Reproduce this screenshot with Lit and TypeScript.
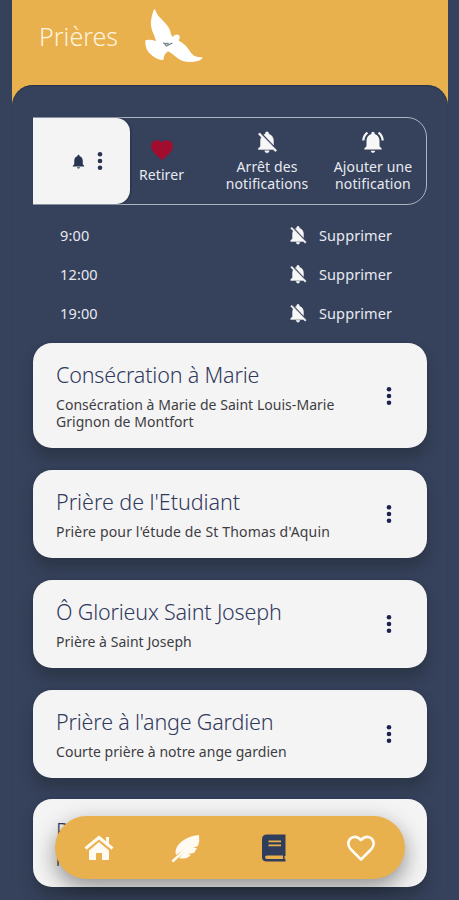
import { LitElement, html, css, svg } from "lit";
import { customElement, property } from "lit/decorators.js";

const P = {
  heart: "M12 21.35l-1.45-1.32C5.4 15.36 2 12.28 2 8.5 2 5.42 4.42 3 7.5 3c1.74 0 3.41.81 4.5 2.09C13.09 3.81 14.76 3 16.5 3 19.58 3 22 5.42 22 8.5c0 3.78-3.4 6.86-8.55 11.54L12 21.35z",
  bell: "M12 22c1.1 0 2-.9 2-2h-4c0 1.1.89 2 2 2zm6-6v-5c0-3.07-1.64-5.64-4.5-6.32V4c0-.83-.67-1.5-1.5-1.5s-1.5.67-1.5 1.5v.68C7.63 5.36 6 7.92 6 11v5l-2 2v1h16v-1l-2-2z",
  bellOff: "M20 18.69L7.84 6.14 5.27 3.49 4 4.76l2.8 2.8v.01c-.52.99-.8 2.16-.8 3.42v5l-2 2v1h13.73l2 2L21 19.72l-1-1.03zM12 22c1.11 0 2-.89 2-2h-4c0 1.11.89 2 2 2zm6-7.32V11c0-3.08-1.64-5.64-4.5-6.32V4c0-.83-.67-1.5-1.5-1.5s-1.5.67-1.5 1.5v.68c-.15.03-.29.08-.42.12-.1.03-.2.07-.3.11h-.01c-.01 0-.01 0-.02.01-.23.09-.46.2-.68.31 0 0-.01 0-.01.01L18 14.68z",
  bellRing: "M7.58 4.08L6.15 2.65C3.75 4.48 2.17 7.3 2.03 10.5h2c.15-2.65 1.51-4.97 3.55-6.42zm12.39 6.42h2c-.15-3.2-1.73-6.02-4.12-7.85l-1.42 1.43c2.02 1.45 3.39 3.77 3.54 6.42zM18 11c0-3.07-1.64-5.64-4.5-6.32V4c0-.83-.67-1.5-1.5-1.5s-1.5.67-1.5 1.5v.68C7.63 5.36 6 7.92 6 11v5l-2 2v1h16v-1l-2-2v-5zm-6 11c.14 0 .27-.01.4-.04.65-.14 1.18-.58 1.44-1.18.1-.24.15-.5.15-.78h-4c.01 1.1.9 2 2.01 2z",
};

const icon = (d: string, cls: string) =>
  html`<svg class="icon ${cls}" viewBox="0 0 24 24">${svg`<path d=${d}></path>`}</svg>`;

const dots = html`<svg class="dots" viewBox="0 0 6 20">
  <circle cx="3" cy="3.2" r="2.3" /><circle cx="3" cy="10" r="2.3" /><circle cx="3" cy="16.8" r="2.3" />
</svg>`;

@customElement("prayer-card")
export class PrayerCard extends LitElement {
  @property() heading = "";
  @property() text = "";
  static styles = css`
    :host { display: flex; align-items: center; box-sizing: border-box; height: 88px;
      padding: 0 35px 0 23px; border-radius: 19px; background: #f5f4f5; box-shadow: 0 10px 12px rgba(42, 53, 69, 0.8), 0 0 2px #26334b; }
    :host([tall]) { height: 105.5px; }
    .copy { flex: 1; min-width: 0; margin-top: -1px; }
    h2 { margin: 0; font-size: 21.5px; line-height: 30px; font-weight: 350; letter-spacing: -0.18px; color: #303a5c; white-space: nowrap; }
    h2.wide { letter-spacing: -0.03px; }
    p { margin: 6px 0 0; font-size: 14px; line-height: 17px; letter-spacing: 0.04px; color: #3d3d42; white-space: pre-line; }
    p.wide { letter-spacing: 0.16px; }
    .dots { width: 6px; height: 20px; fill: #1c2350; }
  `;
  render() {
    const wide = this.heading.includes("Etudiant") ? "wide" : "";
    return html`<div class="copy"><h2 class=${wide}>${this.heading}</h2><p class=${wide}>${this.text}</p></div>${dots}`;
  }
}

@customElement("app-root")
export class AppRoot extends LitElement {
  static styles = css`
    :host { display: block; position: relative; height: 900px; overflow: hidden; background: #36415b;
      font-family: "Noto Sans", "Open Sans", sans-serif; }
    .icon { display: block; fill: #f8f7f8; }
    header { box-sizing: border-box; height: 104px; margin: 0 11px 0 12px; padding: 0 27px; display: flex; align-items: flex-start; background: #e9b04e; }
    h1 { margin: 19px 0 0; width: 105px; font-size: 25px; line-height: 34px; font-weight: 350; color: #fff4df; }
    .dove { width: 70px; height: 70px; margin-left: -4px; }
    .sheet { position: relative; margin: -19px 11px 0 12px; padding: 32px 21px 0; border-radius: 21px 21px 0 0; background: #36415b; box-shadow: inset 0 1px 1px #29354b; }
    .swipe { box-sizing: border-box; height: 88px; display: flex; border: 1px solid #aeb4c2; border-radius: 0 20px 20px 0; color: #e7eaf1; }
    .front { box-sizing: border-box; width: 97px; flex: none; margin: 0 0 0 -1px; padding-left: 39px; display: flex; align-items: center; gap: 13px; background: #f5f4f5; border-radius: 0 14px 14px 0; box-shadow: 1px 0 2px #26334b; }
    .front .dots { width: 6px; height: 20px; fill: #283551; }
    .small { width: 17px; height: 17px; fill: #283551; margin-right: -3px; margin-left: -2px; }
    .action { flex: none; display: flex; flex-direction: column; align-items: center; font-size: 14px; line-height: 17px; letter-spacing: 0.1px; text-align: center; white-space: pre-line; }
    .a1 { width: 63px; padding-top: 19px; }
    .a2 { width: 100px; margin-left: 24px; padding-top: 11px; }
    .a3 { width: 92px; margin-left: 10px; padding-top: 11px; }
    .i24 { width: 26px; height: 26px; margin-bottom: 3px; }
    .red { fill: #a20d2e; margin-bottom: 3px; }
    .times { display: grid; grid-template-rows: repeat(3, 38.7px); padding: 12px 35px 0 27px; color: #e7eaf1; font-size: 14.5px; }
    .time { display: flex; align-items: center; margin-top: -2px; }
    .time span { flex: 1; letter-spacing: 0.15px; }
    .time .icon { width: 22px; height: 22px; margin-right: 10px; stroke: #f8f7f8; stroke-width: 0.45px; }
    .a2 .icon { stroke: #f8f7f8; stroke-width: 0.4px; }
    .time b { width: 73px; font-weight: 400; white-space: nowrap; letter-spacing: 0.1px; }
    .list { display: flex; flex-direction: column; gap: 21.75px; padding-top: 9.9px; }
    nav { position: absolute; left: 55px; top: 816px; width: 350px; height: 63px; box-sizing: border-box; padding: 0 29px; display: flex; align-items: center; justify-content: space-between; border-radius: 32px; background: #e9b04e; box-shadow: 0 8px 22px rgba(0, 0, 0, 0.42); }
    nav svg { display: block; width: 30px; height: 30px; fill: #fffaf2; }
    nav .book { fill: #303d5b; }
  `;
  render() {
    const items = [
      ["Prière de l'Etudiant", "Prière pour l'étude de St Thomas d'Aquin"],
      ["Ô Glorieux Saint Joseph", "Prière à Saint Joseph"],
      ["Prière à l'ange Gardien", "Courte prière à notre ange gardien"],
      ["Prière du soir", "Prière"],
    ];
    return html`
      <header>
        <h1>Prières</h1>
        <svg class="dove" viewBox="0 0 210 210">
          <path fill="#fff" d="M45 27C51 47 60 52 72 65Q92 85 93 103L98 111Q106 102 115 104Q121 108 119 114L116 122Q125 126 132 133C147 144 152 164 166 169Q178 173 188 171Q184 182 173 183Q150 190 126 182C109 176 103 163 84 154Q72 161 70 180Q51 180 35 166Q14 151 16 121Q30 117 48 124Q44 107 37 94Q28 70 38 40Q39 30 45 27Z"/>
          <path fill="none" stroke="#75858a" stroke-width="4" d="M70 128l5 4 4 6 8-4 10-5M74 130l8 1 4-2"/>
        </svg>
      </header>
      <div class="sheet">
        <div class="swipe">
          <div class="front">${icon(P.bell, "small")}${dots}</div>
          <div class="action a1">${icon(P.heart, "i24 red")}Retirer</div>
          <div class="action a2">${icon(P.bellOff, "i24")}Arrêt des\nnotifications</div>
          <div class="action a3">${icon(P.bellRing, "i24")}Ajouter une\nnotification</div>
        </div>
        <div class="times">
          ${["9:00", "12:00", "19:00"].map((t) => html`<div class="time"><span>${t}</span>${icon(P.bellOff, "")}<b>Supprimer</b></div>`)}
        </div>
        <div class="list">
          <prayer-card tall heading="Consécration à Marie" .text=${"Consécration à Marie de Saint Louis-Marie\nGrignon de Montfort"}></prayer-card>
          ${items.map(([h, t]) => html`<prayer-card .heading=${h} .text=${t}></prayer-card>`)}
        </div>
      </div>
      <nav>
        <svg viewBox="0 0 30 30"><path d="M15 9l10 8.5V26q0 1-1 1h-6v-7h-6v7H6q-1 0-1-1v-8.500z"/><path d="M1.500 15.500L15 4.500l13.500 11M23.500 4v7" fill="none" stroke="#fffaf2" stroke-width="3"/></svg>
        <svg viewBox="0 0 30 30"><path d="M28 2Q17 3 10 9Q3 15 5 22L18 13L8 25Q15 27 20 22l-3-1 6-1 3-5-4 0 5-2Q29 8 28 2Z"/><path d="M2 28L18 13" fill="none" stroke="#fffaf2" stroke-width="2.500" stroke-linecap="round"/></svg>
        <svg class="book" viewBox="0 0 30 30"><path fill-rule="evenodd" d="M8 1.500H26.500V23h-1v3h1v2.500H8Q3 28.500 3 24V6.500Q3 1.500 8 1.500ZM9.500 7.500v1.700H22V7.500ZM9.500 11.500v1.700H22V11.500ZM8 22.500q-2 0-2 1.750T8 26H24V22.500Z"/></svg>
        <svg viewBox="0 0 30 30"><path fill="none" stroke="#fffaf2" stroke-width="2.700" stroke-linejoin="round" d="M15 26.500L4.500 16Q0 10 4.500 5.500Q10 1.500 15 7Q20 1.500 25.500 5.500Q30 10 25.500 16Z"/></svg>
      </nav>`;
  }
}
